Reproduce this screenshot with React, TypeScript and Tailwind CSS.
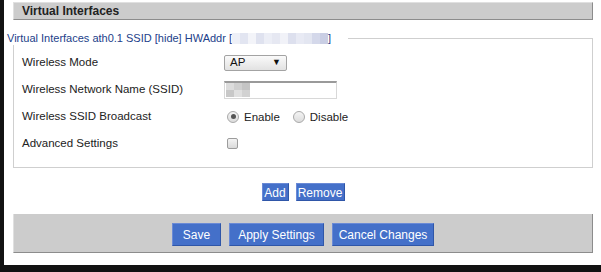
import React from 'react';

const font = { fontFamily: '"Liberation Sans", Arial, sans-serif' };

function Blur({ cells }: { cells: string[] }) {
  return (
    <span className="inline-flex h-[11px] align-middle">
      {cells.map((c, i) => (
        <span key={i} className="w-[8px] h-full" style={{ backgroundColor: c }} />
      ))}
    </span>
  );
}

function Row({ label, children }: { label: string; children: React.ReactNode }) {
  return (
    <div className="flex items-center h-[27px]">
      <div className="w-[202px] text-[11.5px] text-[#222]">{label}</div>
      <div className="flex items-center">{children}</div>
    </div>
  );
}

function Radio({ checked, label }: { checked?: boolean; label: string }) {
  return (
    <label className="flex items-center mr-[10px]">
      <span className="w-[12px] h-[12px] rounded-full border border-[#a9a9a9] bg-gradient-to-b from-[#f4f4f4] to-[#dcdcdc] flex items-center justify-center ml-[3px]">
        {checked && <span className="w-[5px] h-[5px] rounded-full bg-[#555]" />}
      </span>
      <span className="ml-[5px] mt-[3px] text-[11.5px] text-[#222]">{label}</span>
    </label>
  );
}

function BlueButton({ w, children }: { w: string; children: React.ReactNode }) {
  return (
    <button className={`${w} h-full bg-[#4470c9] text-white text-[12px] border-t border-l border-[#6a8ad6] border-b border-r border-b-[#2f56a8] border-r-[#2f56a8]`}>
      {children}
    </button>
  );
}

export default function App() {
  return (
    <div className="bg-[#121212] h-[272px] pl-[4px] pb-[7px]" style={font}>
      <div className="bg-white h-[265px] pl-[9px] pr-[8px] pt-[2px] flex flex-col">
        <div className="h-[18px] bg-[#cccccc] border-t border-l border-[#e0e0e0] border-b border-r border-b-[#8c8c8c] border-r-[#8c8c8c] flex items-center pl-[8px]">
          <span className="text-[12px] font-bold text-[#222]">Virtual Interfaces</span>
        </div>

        <div className="mt-[11px] h-[14px] flex items-center -ml-[6px]">
          <span className="text-[11px] text-[#22418a] whitespace-nowrap flex items-center">
            Virtual Interfaces ath0.1 SSID [hide] HWAddr [
            <Blur cells={['#eef0f7', '#e2e5f1', '#f3f4f9', '#dfe2ef', '#eceef6', '#e6e8f2', '#f1f2f8', '#dde0ee', '#e8eaf4', '#e3e6f1', '#d4d8ea', '#c9cee4']} />
            ]
          </span>
          <div className="flex-1 h-px bg-[#cfcfcf] ml-[17px]" />
          <div className="w-px h-[7px] self-end bg-[#cfcfcf]" />
        </div>
        <div className="border-l border-r border-b border-[#cfcfcf] pl-[8px] pt-[4px] pb-[10px]">
          <Row label="Wireless Mode">
            <div className="w-[63px] h-[16px] border border-[#a3a3a3] rounded-[2px] bg-gradient-to-b from-[#fafafa] to-[#e2e2e2] flex items-center justify-between pl-[5px] pr-[5px]">
              <span className="text-[11.5px] text-[#111]">AP</span>
              <span className="text-[9px] text-[#111]">▼</span>
            </div>
          </Row>
          <Row label="Wireless Network Name (SSID)">
            <div className="w-[113px] h-[18px] border border-[#d8d8d8] border-t-[#9a9a9a] border-t-2 bg-white flex items-center pl-[1px]">
              <span className="flex h-[14px]">
                <span className="flex flex-col w-[8px]">
                  <span className="flex-1 bg-[#dcdcdc]" />
                  <span className="flex-1 bg-[#c8c8c8]" />
                </span>
                <span className="flex flex-col w-[8px]">
                  <span className="flex-1 bg-[#cfcfcf]" />
                  <span className="flex-1 bg-[#e0e0e0]" />
                </span>
                <span className="flex flex-col w-[8px]">
                  <span className="flex-1 bg-[#c4c4c4]" />
                  <span className="flex-1 bg-[#d2d2d2]" />
                </span>
              </span>
            </div>
          </Row>
          <Row label="Wireless SSID Broadcast">
            <Radio checked label="Enable" />
            <Radio label="Disable" />
          </Row>
          <Row label="Advanced Settings">
            <span className="ml-[3px] w-[11px] h-[11px] rounded-[2px] border border-[#9c9c9c] bg-gradient-to-b from-[#f4f4f4] to-[#dadada]" />
          </Row>
        </div>

        <div className="mt-[15px] h-[18px] flex justify-center gap-[7px]">
          <BlueButton w="w-[27px]">Add</BlueButton>
          <BlueButton w="w-[49px]">Remove</BlueButton>
        </div>

        <div className="mt-[13px] h-[39px] bg-[#cccccc] border-l border-[#e0e0e0] border-b border-r border-b-[#8c8c8c] border-r-[#8c8c8c] pt-[9px] pb-[6px] flex justify-center gap-[8px]">
          <BlueButton w="w-[49px]">Save</BlueButton>
          <BlueButton w="w-[95px]">Apply Settings</BlueButton>
          <BlueButton w="w-[102px]">Cancel Changes</BlueButton>
        </div>
      </div>
    </div>
  );
}
